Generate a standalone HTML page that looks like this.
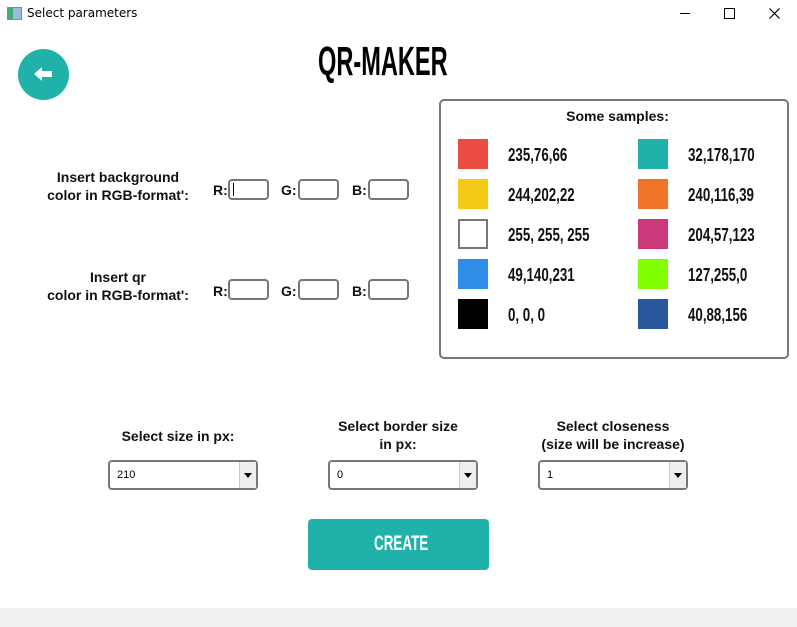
<!DOCTYPE html>
<html><head><style>
body{margin:0;width:797px;height:627px;background:#fff;position:relative;overflow:hidden;font-family:"Liberation Sans",sans-serif}
.a{position:absolute}
.lbl{position:absolute;font-weight:bold;font-size:14px;text-align:center;color:#111;line-height:18px}
.box{position:absolute;border:2px solid #777;border-radius:4px;box-sizing:border-box;width:41px;height:21px}
.sw{position:absolute;width:30px;height:30px}
.nt{position:absolute;font-weight:bold;font-size:18px;transform:scaleX(.74);transform-origin:left;color:#111}
.sel{position:absolute;width:150px;height:30px;border:2px solid #777;border-radius:4px;box-sizing:border-box;font-size:11px;line-height:26px;padding-left:7px}
.sel i{position:absolute;right:0;top:0;width:16px;height:26px;background:#eee;border-left:1px solid #ccc}
.sel i:after{content:"";position:absolute;left:4px;top:11px;border:4px solid transparent;border-top:5px solid #000}
</style></head><body>
<div class="a" style="left:7px;top:7px;width:13px;height:11px;border:1px solid #888;background:linear-gradient(90deg,#4a7 0 40%,#9bd 40%)"></div>
<div class="a" style="left:27px;top:6px;font-size:12px;font-family:'DejaVu Sans',sans-serif">Select parameters</div>
<div class="a" style="left:680px;top:13px;width:10px;height:1px;background:#000"></div>
<div class="a" style="left:724px;top:8px;width:9px;height:9px;border:1px solid #000"></div>
<svg class="a" style="left:769px;top:8px" width="11" height="11"><path d="M0.5 0.5L10.5 10.5M10.5 0.5L0.5 10.5" stroke="#000" stroke-width="1.2"/></svg>
<div class="a" style="left:318px;top:38px;font-size:41px;font-weight:bold;transform:scaleX(.575);transform-origin:left">QR-MAKER</div>
<div class="a" style="left:18px;top:49px;width:51px;height:51px;border-radius:50%;background:#20b2aa"></div>
<svg class="a" style="left:33px;top:66px" width="20" height="16"><path d="M1 8L9 1V5H19V11H9V15Z" fill="#fff"/></svg>
<div class="a" style="left:439px;top:99px;width:350px;height:260px;border:2px solid #777;border-radius:5px;box-sizing:border-box"></div>
<div class="lbl" style="left:540px;top:107px;width:155px">Some samples:</div>
<div class="sw" style="left:458px;top:139px;background:#eb4c42"></div><div class="nt" style="left:508px;top:145px">235,76,66</div>
<div class="sw" style="left:458px;top:179px;background:#f4ca16"></div><div class="nt" style="left:508px;top:185px">244,202,22</div>
<div class="sw" style="left:458px;top:219px;border:2px solid #777;box-sizing:border-box"></div><div class="nt" style="left:508px;top:225px">255, 255, 255</div>
<div class="sw" style="left:458px;top:259px;background:#318ce7"></div><div class="nt" style="left:508px;top:265px">49,140,231</div>
<div class="sw" style="left:458px;top:299px;background:#000"></div><div class="nt" style="left:508px;top:305px">0, 0, 0</div>
<div class="sw" style="left:638px;top:139px;background:#20b2aa"></div><div class="nt" style="left:688px;top:145px">32,178,170</div>
<div class="sw" style="left:638px;top:179px;background:#f07427"></div><div class="nt" style="left:688px;top:185px">240,116,39</div>
<div class="sw" style="left:638px;top:219px;background:#cc397b"></div><div class="nt" style="left:688px;top:225px">204,57,123</div>
<div class="sw" style="left:638px;top:259px;background:#7fff00"></div><div class="nt" style="left:688px;top:265px">127,255,0</div>
<div class="sw" style="left:638px;top:299px;background:#28589c"></div><div class="nt" style="left:688px;top:305px">40,88,156</div>
<div class="lbl" style="left:28px;top:168px;width:180px">Insert background<br>color in RGB-format':</div>
<div class="lbl" style="left:213px;top:181px">R:</div><div class="box" style="left:228px;top:179px"><div style="width:1px;height:13px;background:#000;margin:2px 0 0 3px"></div></div>
<div class="lbl" style="left:281px;top:181px">G:</div><div class="box" style="left:298px;top:179px"></div>
<div class="lbl" style="left:352px;top:181px">B:</div><div class="box" style="left:368px;top:179px"></div>
<div class="lbl" style="left:28px;top:268px;width:180px">Insert qr<br>color in RGB-format':</div>
<div class="lbl" style="left:213px;top:282px">R:</div><div class="box" style="left:228px;top:279px"></div>
<div class="lbl" style="left:281px;top:282px">G:</div><div class="box" style="left:298px;top:279px"></div>
<div class="lbl" style="left:352px;top:282px">B:</div><div class="box" style="left:368px;top:279px"></div>
<div class="lbl" style="left:98px;top:427px;width:160px">Select size in px:</div>
<div class="lbl" style="left:318px;top:417px;width:160px">Select border size<br>in px:</div>
<div class="lbl" style="left:518px;top:417px;width:190px">Select closeness<br>(size will be increase)</div>
<div class="sel" style="left:108px;top:460px">210<i></i></div>
<div class="sel" style="left:328px;top:460px">0<i></i></div>
<div class="sel" style="left:538px;top:460px">1<i></i></div>
<div class="a" style="left:308px;top:519px;width:181px;height:51px;background:#20b2aa;border-radius:4px"></div>
<div class="a" style="left:374px;top:532px;color:#fff;font-weight:bold;font-size:21px;transform:scaleX(.64);transform-origin:left">CREATE</div>
<div class="a" style="left:0;top:608px;width:797px;height:19px;background:#f0f0f0"></div>
</body></html>
